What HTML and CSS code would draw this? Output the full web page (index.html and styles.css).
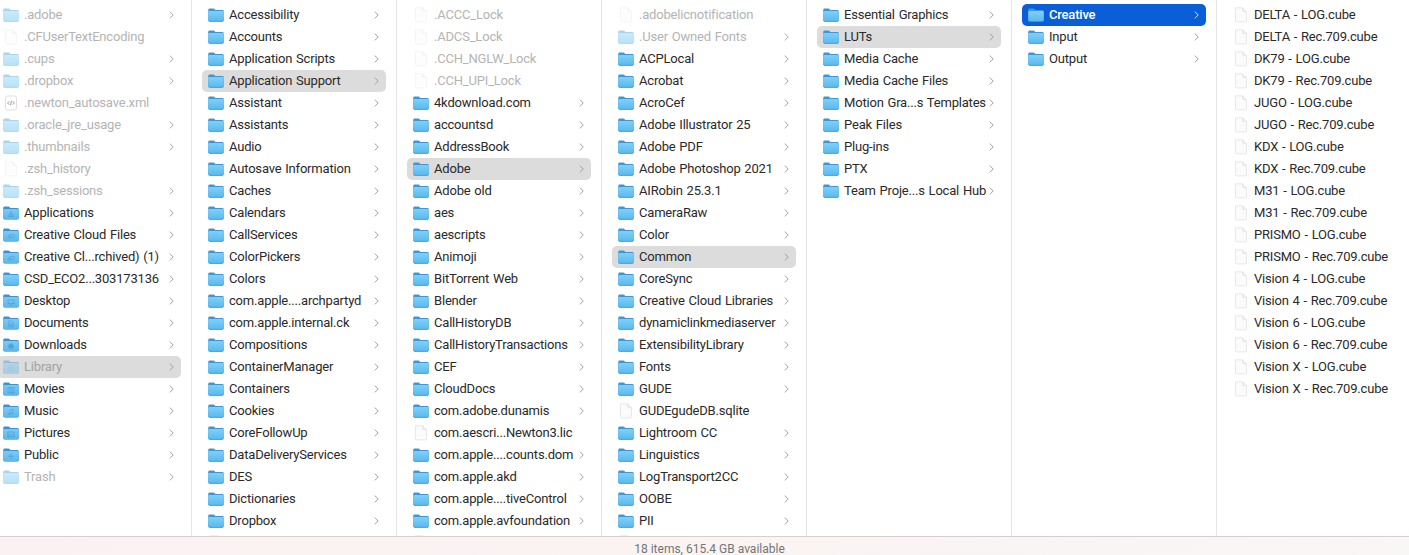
FILE: index.html
```html
<!DOCTYPE html>
<html lang="en">
<head>
<meta charset="utf-8">
<title>Finder</title>
<link rel="stylesheet" href="styles.css">
</head>
<body>
<svg class="defs" aria-hidden="true">
  <defs>
    <linearGradient id="fb" x1="0" y1="0" x2="0" y2="1"><stop offset="0" stop-color="#7fd0f8"/><stop offset="1" stop-color="#5ab8ee"/></linearGradient>
    <linearGradient id="sb" x1="0" y1="0" x2="0" y2="1"><stop offset="0" stop-color="#7ccaf5"/><stop offset="1" stop-color="#5fb5e8"/></linearGradient>
    <symbol id="folder" viewBox="0 0 16 14">
      <path d="M1.8.6h3.600c.6 0 .9.2 1.300.6l.7.7h6.800c1 0 1.600.6 1.600 1.600v8.300c0 1-.6 1.600-1.600 1.600H1.800c-1 0-1.600-.6-1.600-1.600V2.200C.2 1.200.8.600 1.800.600z" fill="#3c97d3"/>
      <path d="M.2 4.400c0-.8.6-1.300 1.500-1.300h12.600c.9 0 1.500.5 1.500 1.300v7.400c0 1-.6 1.600-1.600 1.600H1.800c-1 0-1.600-.6-1.600-1.600z" fill="url(#fb)"/>
      <path d="M.4 12.500c.3.600.8.900 1.400.900h12.400c.6 0 1.100-.3 1.400-.9" fill="none" stroke="#3d9ad6" stroke-width=".7"/>
    </symbol>
    <symbol id="sfolder" viewBox="0 0 16 14">
      <path d="M1.800.6h3.600c.6 0 .9.200 1.300.6l.7.700h6.800c1 0 1.600.600 1.600 1.600v8.300c0 1-.6 1.600-1.600 1.600H1.800c-1 0-1.600-.6-1.600-1.600V2.200C.2 1.200.8.600 1.800.600z" fill="#3b94cf"/>
      <path d="M.2 4.200c0-.8.6-1.300 1.500-1.300h12.600c.9 0 1.500.5 1.500 1.300v7.600c0 1-.6 1.600-1.600 1.600H1.800c-1 0-1.600-.6-1.600-1.600z" fill="url(#sb)"/>
    </symbol>
    <symbol id="doc" viewBox="0 0 16 16">
      <path d="M2.500.8h7.200l3.800 3.800v9.100c0 .8-.4 1.200-1.200 1.200H3.700c-.8 0-1.200-.4-1.200-1.200z" fill="#fbfbfb" stroke="#e2e2e2" stroke-width=".8"/>
      <path d="M9.700.8v3c0 .5.300.8.800.8h3" fill="#efefef" stroke="#dedede" stroke-width=".7"/>
    </symbol>
    <symbol id="xml" viewBox="0 0 16 16">
      <rect x="2.500" y="1" width="11" height="14" rx="2" fill="#fff" stroke="#cfcfcf" stroke-width=".8"/>
      <path d="M6.200 6.300 4.600 8l1.600 1.700M9.800 6.300 11.400 8 9.800 9.700M8.600 5.800 7.400 10.200" fill="none" stroke="#666" stroke-width=".8"/>
    </symbol>
    <symbol id="chev" viewBox="0 0 5 8">
      <path d="M.8.600 4.200 4 .8 7.400" fill="none" stroke="currentColor" stroke-width="1"/>
    </symbol>
  </defs>
</svg>

<main class="browser">
  <section class="col col-first">
    <div class="row dim"><svg class="ic"><use href="#folder"/></svg><span class="name">.adobe</span><svg class="chev"><use href="#chev"/></svg></div>
    <div class="row dim"><svg class="ic-doc"><use href="#doc"/></svg><span class="name">.CFUserTextEncoding</span></div>
    <div class="row dim"><svg class="ic"><use href="#folder"/></svg><span class="name">.cups</span><svg class="chev"><use href="#chev"/></svg></div>
    <div class="row dim"><svg class="ic"><use href="#folder"/></svg><span class="name">.dropbox</span><svg class="chev"><use href="#chev"/></svg></div>
    <div class="row dim"><svg class="ic-doc ic-full"><use href="#xml"/></svg><span class="name">.newton_autosave.xml</span></div>
    <div class="row dim"><svg class="ic"><use href="#folder"/></svg><span class="name">.oracle_jre_usage</span><svg class="chev"><use href="#chev"/></svg></div>
    <div class="row dim"><svg class="ic"><use href="#folder"/></svg><span class="name">.thumbnails</span><svg class="chev"><use href="#chev"/></svg></div>
    <div class="row dim"><svg class="ic-doc"><use href="#doc"/></svg><span class="name">.zsh_history</span></div>
    <div class="row dim"><svg class="ic"><use href="#folder"/></svg><span class="name">.zsh_sessions</span><svg class="chev"><use href="#chev"/></svg></div>
    <div class="row"><svg class="ic" viewBox="0 0 16 14"><use href="#sfolder" width="16" height="14"/><path class="glyph" d="M8 5.500 5.500 10.500h5zM6.500 9h3"/></svg><span class="name">Applications</span><svg class="chev"><use href="#chev"/></svg></div>
    <div class="row"><svg class="ic" viewBox="0 0 16 14"><use href="#sfolder" width="16" height="14"/><path class="glyph" d="M6 8.300c0-1.500 3-2.600 4.800-1.700 1.500.8.900 2.900-1 2.900-1.500 0-2.100-1.800-3.400-1.800-1.400 0-1.800 2-.2 2.300 1 .2 1.700-.3 2.300-.8"/></svg><span class="name">Creative Cloud Files</span><svg class="chev"><use href="#chev"/></svg></div>
    <div class="row"><svg class="ic" viewBox="0 0 16 14"><use href="#sfolder" width="16" height="14"/><path class="glyph" d="M6 8.300c0-1.500 3-2.600 4.800-1.700 1.500.8.900 2.900-1 2.900-1.500 0-2.100-1.800-3.400-1.800-1.400 0-1.800 2-.2 2.300 1 .2 1.700-.3 2.300-.8"/></svg><span class="name">Creative Cl...rchived) (1)</span><svg class="chev"><use href="#chev"/></svg></div>
    <div class="row"><svg class="ic"><use href="#folder"/></svg><span class="name">CSD_ECO2...303173136</span><svg class="chev"><use href="#chev"/></svg></div>
    <div class="row"><svg class="ic" viewBox="0 0 16 14"><use href="#sfolder" width="16" height="14"/><path class="glyph" d="M5 6h6v3.500H5zM6.500 11h3"/></svg><span class="name">Desktop</span><svg class="chev"><use href="#chev"/></svg></div>
    <div class="row"><svg class="ic" viewBox="0 0 16 14"><use href="#sfolder" width="16" height="14"/><path class="glyph" d="M5.800 5h3l1.500 1.500V11H5.800zM6.800 8h2.500M6.800 9.500h2.500"/></svg><span class="name">Documents</span><svg class="chev"><use href="#chev"/></svg></div>
    <div class="row"><svg class="ic" viewBox="0 0 16 14"><use href="#sfolder" width="16" height="14"/><circle class="glyph-fill" cx="8" cy="8.200" r="2.700"/></svg><span class="name">Downloads</span><svg class="chev"><use href="#chev"/></svg></div>
    <div class="row sel-gray dim-text"><svg class="ic dim-ic" viewBox="0 0 16 14"><use href="#sfolder" width="16" height="14"/><path class="glyph" d="M5.500 6h5M5 8h6M5 10.500h6"/></svg><span class="name">Library</span><svg class="chev"><use href="#chev"/></svg></div>
    <div class="row"><svg class="ic" viewBox="0 0 16 14"><use href="#sfolder" width="16" height="14"/><path class="glyph" d="M5 5.500h6v5.500H5zM7 5.500V11M9 5.500V11"/></svg><span class="name">Movies</span><svg class="chev"><use href="#chev"/></svg></div>
    <div class="row"><svg class="ic" viewBox="0 0 16 14"><use href="#sfolder" width="16" height="14"/><path class="glyph" d="M7 10V6l3-.7v4"/><circle class="glyph-fill" cx="6.200" cy="10.200" r=".9"/><circle class="glyph-fill" cx="9.200" cy="9.500" r=".9"/></svg><span class="name">Music</span><svg class="chev"><use href="#chev"/></svg></div>
    <div class="row"><svg class="ic" viewBox="0 0 16 14"><use href="#sfolder" width="16" height="14"/><path class="glyph" d="M4.800 6h6.400v4.800H4.800zM5 10l2-2 1.500 1.300 1-1 1.500 1.500"/></svg><span class="name">Pictures</span><svg class="chev"><use href="#chev"/></svg></div>
    <div class="row"><svg class="ic" viewBox="0 0 16 14"><use href="#sfolder" width="16" height="14"/><path class="glyph" d="M8 5.500v5.500M5 8.200h6"/></svg><span class="name">Public</span><svg class="chev"><use href="#chev"/></svg></div>
    <div class="row dim"><svg class="ic"><use href="#folder"/></svg><span class="name">Trash</span><svg class="chev"><use href="#chev"/></svg></div>
  </section>

  <section class="col">
    <div class="row"><svg class="ic"><use href="#folder"/></svg><span class="name">Accessibility</span><svg class="chev"><use href="#chev"/></svg></div>
    <div class="row"><svg class="ic"><use href="#folder"/></svg><span class="name">Accounts</span><svg class="chev"><use href="#chev"/></svg></div>
    <div class="row"><svg class="ic"><use href="#folder"/></svg><span class="name">Application Scripts</span><svg class="chev"><use href="#chev"/></svg></div>
    <div class="row sel-gray"><svg class="ic"><use href="#folder"/></svg><span class="name">Application Support</span><svg class="chev"><use href="#chev"/></svg></div>
    <div class="row"><svg class="ic"><use href="#folder"/></svg><span class="name">Assistant</span><svg class="chev"><use href="#chev"/></svg></div>
    <div class="row"><svg class="ic"><use href="#folder"/></svg><span class="name">Assistants</span><svg class="chev"><use href="#chev"/></svg></div>
    <div class="row"><svg class="ic"><use href="#folder"/></svg><span class="name">Audio</span><svg class="chev"><use href="#chev"/></svg></div>
    <div class="row"><svg class="ic"><use href="#folder"/></svg><span class="name">Autosave Information</span><svg class="chev"><use href="#chev"/></svg></div>
    <div class="row"><svg class="ic"><use href="#folder"/></svg><span class="name">Caches</span><svg class="chev"><use href="#chev"/></svg></div>
    <div class="row"><svg class="ic"><use href="#folder"/></svg><span class="name">Calendars</span><svg class="chev"><use href="#chev"/></svg></div>
    <div class="row"><svg class="ic"><use href="#folder"/></svg><span class="name">CallServices</span><svg class="chev"><use href="#chev"/></svg></div>
    <div class="row"><svg class="ic"><use href="#folder"/></svg><span class="name">ColorPickers</span><svg class="chev"><use href="#chev"/></svg></div>
    <div class="row"><svg class="ic"><use href="#folder"/></svg><span class="name">Colors</span><svg class="chev"><use href="#chev"/></svg></div>
    <div class="row"><svg class="ic"><use href="#folder"/></svg><span class="name">com.apple....archpartyd</span><svg class="chev"><use href="#chev"/></svg></div>
    <div class="row"><svg class="ic"><use href="#folder"/></svg><span class="name">com.apple.internal.ck</span><svg class="chev"><use href="#chev"/></svg></div>
    <div class="row"><svg class="ic"><use href="#folder"/></svg><span class="name">Compositions</span><svg class="chev"><use href="#chev"/></svg></div>
    <div class="row"><svg class="ic"><use href="#folder"/></svg><span class="name">ContainerManager</span><svg class="chev"><use href="#chev"/></svg></div>
    <div class="row"><svg class="ic"><use href="#folder"/></svg><span class="name">Containers</span><svg class="chev"><use href="#chev"/></svg></div>
    <div class="row"><svg class="ic"><use href="#folder"/></svg><span class="name">Cookies</span><svg class="chev"><use href="#chev"/></svg></div>
    <div class="row"><svg class="ic"><use href="#folder"/></svg><span class="name">CoreFollowUp</span><svg class="chev"><use href="#chev"/></svg></div>
    <div class="row"><svg class="ic"><use href="#folder"/></svg><span class="name">DataDeliveryServices</span><svg class="chev"><use href="#chev"/></svg></div>
    <div class="row"><svg class="ic"><use href="#folder"/></svg><span class="name">DES</span><svg class="chev"><use href="#chev"/></svg></div>
    <div class="row"><svg class="ic"><use href="#folder"/></svg><span class="name">Dictionaries</span><svg class="chev"><use href="#chev"/></svg></div>
    <div class="row"><svg class="ic"><use href="#folder"/></svg><span class="name">Dropbox</span><svg class="chev"><use href="#chev"/></svg></div>
    <div class="row"><svg class="ic-doc"><use href="#doc"/></svg></div>
  </section>

  <section class="col">
    <div class="row dim"><svg class="ic-doc"><use href="#doc"/></svg><span class="name">.ACCC_Lock</span></div>
    <div class="row dim"><svg class="ic-doc"><use href="#doc"/></svg><span class="name">.ADCS_Lock</span></div>
    <div class="row dim"><svg class="ic-doc"><use href="#doc"/></svg><span class="name">.CCH_NGLW_Lock</span></div>
    <div class="row dim"><svg class="ic-doc"><use href="#doc"/></svg><span class="name">.CCH_UPI_Lock</span></div>
    <div class="row"><svg class="ic"><use href="#folder"/></svg><span class="name">4kdownload.com</span><svg class="chev"><use href="#chev"/></svg></div>
    <div class="row"><svg class="ic"><use href="#folder"/></svg><span class="name">accountsd</span><svg class="chev"><use href="#chev"/></svg></div>
    <div class="row"><svg class="ic"><use href="#folder"/></svg><span class="name">AddressBook</span><svg class="chev"><use href="#chev"/></svg></div>
    <div class="row sel-gray"><svg class="ic"><use href="#folder"/></svg><span class="name">Adobe</span><svg class="chev"><use href="#chev"/></svg></div>
    <div class="row"><svg class="ic"><use href="#folder"/></svg><span class="name">Adobe old</span><svg class="chev"><use href="#chev"/></svg></div>
    <div class="row"><svg class="ic"><use href="#folder"/></svg><span class="name">aes</span><svg class="chev"><use href="#chev"/></svg></div>
    <div class="row"><svg class="ic"><use href="#folder"/></svg><span class="name">aescripts</span><svg class="chev"><use href="#chev"/></svg></div>
    <div class="row"><svg class="ic"><use href="#folder"/></svg><span class="name">Animoji</span><svg class="chev"><use href="#chev"/></svg></div>
    <div class="row"><svg class="ic"><use href="#folder"/></svg><span class="name">BitTorrent Web</span><svg class="chev"><use href="#chev"/></svg></div>
    <div class="row"><svg class="ic"><use href="#folder"/></svg><span class="name">Blender</span><svg class="chev"><use href="#chev"/></svg></div>
    <div class="row"><svg class="ic"><use href="#folder"/></svg><span class="name">CallHistoryDB</span><svg class="chev"><use href="#chev"/></svg></div>
    <div class="row"><svg class="ic"><use href="#folder"/></svg><span class="name">CallHistoryTransactions</span><svg class="chev"><use href="#chev"/></svg></div>
    <div class="row"><svg class="ic"><use href="#folder"/></svg><span class="name">CEF</span><svg class="chev"><use href="#chev"/></svg></div>
    <div class="row"><svg class="ic"><use href="#folder"/></svg><span class="name">CloudDocs</span><svg class="chev"><use href="#chev"/></svg></div>
    <div class="row"><svg class="ic"><use href="#folder"/></svg><span class="name">com.adobe.dunamis</span><svg class="chev"><use href="#chev"/></svg></div>
    <div class="row"><svg class="ic-doc"><use href="#doc"/></svg><span class="name">com.aescri...Newton3.lic</span></div>
    <div class="row"><svg class="ic"><use href="#folder"/></svg><span class="name">com.apple....counts.dom</span><svg class="chev"><use href="#chev"/></svg></div>
    <div class="row"><svg class="ic"><use href="#folder"/></svg><span class="name">com.apple.akd</span><svg class="chev"><use href="#chev"/></svg></div>
    <div class="row"><svg class="ic"><use href="#folder"/></svg><span class="name">com.apple....tiveControl</span><svg class="chev"><use href="#chev"/></svg></div>
    <div class="row"><svg class="ic"><use href="#folder"/></svg><span class="name">com.apple.avfoundation</span><svg class="chev"><use href="#chev"/></svg></div>
    <div class="row"><svg class="ic-doc"><use href="#doc"/></svg></div>
  </section>

  <section class="col">
    <div class="row dim"><svg class="ic-doc"><use href="#doc"/></svg><span class="name">.adobelicnotification</span></div>
    <div class="row dim"><svg class="ic"><use href="#folder"/></svg><span class="name">.User Owned Fonts</span><svg class="chev"><use href="#chev"/></svg></div>
    <div class="row"><svg class="ic"><use href="#folder"/></svg><span class="name">ACPLocal</span><svg class="chev"><use href="#chev"/></svg></div>
    <div class="row"><svg class="ic"><use href="#folder"/></svg><span class="name">Acrobat</span><svg class="chev"><use href="#chev"/></svg></div>
    <div class="row"><svg class="ic"><use href="#folder"/></svg><span class="name">AcroCef</span><svg class="chev"><use href="#chev"/></svg></div>
    <div class="row"><svg class="ic"><use href="#folder"/></svg><span class="name">Adobe Illustrator 25</span><svg class="chev"><use href="#chev"/></svg></div>
    <div class="row"><svg class="ic"><use href="#folder"/></svg><span class="name">Adobe PDF</span><svg class="chev"><use href="#chev"/></svg></div>
    <div class="row"><svg class="ic"><use href="#folder"/></svg><span class="name">Adobe Photoshop 2021</span><svg class="chev"><use href="#chev"/></svg></div>
    <div class="row"><svg class="ic"><use href="#folder"/></svg><span class="name">AIRobin 25.3.1</span><svg class="chev"><use href="#chev"/></svg></div>
    <div class="row"><svg class="ic"><use href="#folder"/></svg><span class="name">CameraRaw</span><svg class="chev"><use href="#chev"/></svg></div>
    <div class="row"><svg class="ic"><use href="#folder"/></svg><span class="name">Color</span><svg class="chev"><use href="#chev"/></svg></div>
    <div class="row sel-gray"><svg class="ic"><use href="#folder"/></svg><span class="name">Common</span><svg class="chev"><use href="#chev"/></svg></div>
    <div class="row"><svg class="ic"><use href="#folder"/></svg><span class="name">CoreSync</span><svg class="chev"><use href="#chev"/></svg></div>
    <div class="row"><svg class="ic"><use href="#folder"/></svg><span class="name">Creative Cloud Libraries</span><svg class="chev"><use href="#chev"/></svg></div>
    <div class="row"><svg class="ic"><use href="#folder"/></svg><span class="name">dynamiclinkmediaserver</span><svg class="chev"><use href="#chev"/></svg></div>
    <div class="row"><svg class="ic"><use href="#folder"/></svg><span class="name">ExtensibilityLibrary</span><svg class="chev"><use href="#chev"/></svg></div>
    <div class="row"><svg class="ic"><use href="#folder"/></svg><span class="name">Fonts</span><svg class="chev"><use href="#chev"/></svg></div>
    <div class="row"><svg class="ic"><use href="#folder"/></svg><span class="name">GUDE</span><svg class="chev"><use href="#chev"/></svg></div>
    <div class="row"><svg class="ic-doc"><use href="#doc"/></svg><span class="name">GUDEgudeDB.sqlite</span></div>
    <div class="row"><svg class="ic"><use href="#folder"/></svg><span class="name">Lightroom CC</span><svg class="chev"><use href="#chev"/></svg></div>
    <div class="row"><svg class="ic"><use href="#folder"/></svg><span class="name">Linguistics</span><svg class="chev"><use href="#chev"/></svg></div>
    <div class="row"><svg class="ic"><use href="#folder"/></svg><span class="name">LogTransport2CC</span><svg class="chev"><use href="#chev"/></svg></div>
    <div class="row"><svg class="ic"><use href="#folder"/></svg><span class="name">OOBE</span><svg class="chev"><use href="#chev"/></svg></div>
    <div class="row"><svg class="ic"><use href="#folder"/></svg><span class="name">PII</span><svg class="chev"><use href="#chev"/></svg></div>
    <div class="row"><svg class="ic-doc"><use href="#doc"/></svg></div>
  </section>

  <section class="col">
    <div class="row"><svg class="ic"><use href="#folder"/></svg><span class="name">Essential Graphics</span><svg class="chev"><use href="#chev"/></svg></div>
    <div class="row sel-gray"><svg class="ic"><use href="#folder"/></svg><span class="name">LUTs</span><svg class="chev"><use href="#chev"/></svg></div>
    <div class="row"><svg class="ic"><use href="#folder"/></svg><span class="name">Media Cache</span><svg class="chev"><use href="#chev"/></svg></div>
    <div class="row"><svg class="ic"><use href="#folder"/></svg><span class="name">Media Cache Files</span><svg class="chev"><use href="#chev"/></svg></div>
    <div class="row"><svg class="ic"><use href="#folder"/></svg><span class="name">Motion Gra...s Templates</span><svg class="chev"><use href="#chev"/></svg></div>
    <div class="row"><svg class="ic"><use href="#folder"/></svg><span class="name">Peak Files</span><svg class="chev"><use href="#chev"/></svg></div>
    <div class="row"><svg class="ic"><use href="#folder"/></svg><span class="name">Plug-ins</span><svg class="chev"><use href="#chev"/></svg></div>
    <div class="row"><svg class="ic"><use href="#folder"/></svg><span class="name">PTX</span><svg class="chev"><use href="#chev"/></svg></div>
    <div class="row"><svg class="ic"><use href="#folder"/></svg><span class="name">Team Proje...s Local Hub</span><svg class="chev"><use href="#chev"/></svg></div>
  </section>

  <section class="col">
    <div class="row sel-blue"><svg class="ic"><use href="#folder"/></svg><span class="name">Creative</span><svg class="chev"><use href="#chev"/></svg></div>
    <div class="row"><svg class="ic"><use href="#folder"/></svg><span class="name">Input</span><svg class="chev"><use href="#chev"/></svg></div>
    <div class="row"><svg class="ic"><use href="#folder"/></svg><span class="name">Output</span><svg class="chev"><use href="#chev"/></svg></div>
  </section>

  <section class="col col-last">
    <div class="row"><svg class="ic-doc"><use href="#doc"/></svg><span class="name">DELTA - LOG.cube</span></div>
    <div class="row"><svg class="ic-doc"><use href="#doc"/></svg><span class="name">DELTA - Rec.709.cube</span></div>
    <div class="row"><svg class="ic-doc"><use href="#doc"/></svg><span class="name">DK79 - LOG.cube</span></div>
    <div class="row"><svg class="ic-doc"><use href="#doc"/></svg><span class="name">DK79 - Rec.709.cube</span></div>
    <div class="row"><svg class="ic-doc"><use href="#doc"/></svg><span class="name">JUGO - LOG.cube</span></div>
    <div class="row"><svg class="ic-doc"><use href="#doc"/></svg><span class="name">JUGO - Rec.709.cube</span></div>
    <div class="row"><svg class="ic-doc"><use href="#doc"/></svg><span class="name">KDX - LOG.cube</span></div>
    <div class="row"><svg class="ic-doc"><use href="#doc"/></svg><span class="name">KDX - Rec.709.cube</span></div>
    <div class="row"><svg class="ic-doc"><use href="#doc"/></svg><span class="name">M31 - LOG.cube</span></div>
    <div class="row"><svg class="ic-doc"><use href="#doc"/></svg><span class="name">M31 - Rec.709.cube</span></div>
    <div class="row"><svg class="ic-doc"><use href="#doc"/></svg><span class="name">PRISMO - LOG.cube</span></div>
    <div class="row"><svg class="ic-doc"><use href="#doc"/></svg><span class="name">PRISMO - Rec.709.cube</span></div>
    <div class="row"><svg class="ic-doc"><use href="#doc"/></svg><span class="name">Vision 4 - LOG.cube</span></div>
    <div class="row"><svg class="ic-doc"><use href="#doc"/></svg><span class="name">Vision 4 - Rec.709.cube</span></div>
    <div class="row"><svg class="ic-doc"><use href="#doc"/></svg><span class="name">Vision 6 - LOG.cube</span></div>
    <div class="row"><svg class="ic-doc"><use href="#doc"/></svg><span class="name">Vision 6 - Rec.709.cube</span></div>
    <div class="row"><svg class="ic-doc"><use href="#doc"/></svg><span class="name">Vision X - LOG.cube</span></div>
    <div class="row"><svg class="ic-doc"><use href="#doc"/></svg><span class="name">Vision X - Rec.709.cube</span></div>
  </section>
</main>

<footer class="status">18 items, 615.4 GB available</footer>
</body>
</html>
```

FILE: styles.css
```css
* { box-sizing: border-box; }

html, body {
  margin: 0;
  height: 555px;
  overflow: hidden;
  background: #fff;
}

body {
  display: flex;
  flex-direction: column;
  font-family: Roboto, "Liberation Sans", sans-serif;
  font-size: 13px;
  letter-spacing: -0.19px;
  word-spacing: 0.8px;
  color: #2a2a2a;
}

.defs {
  position: absolute;
  width: 0;
  height: 0;
}

.browser {
  display: flex;
  flex: none;
  height: 536px;
  overflow: hidden;
}

.col {
  flex: none;
  width: 205px;
  padding: 4px 10px 0;
  border-right: 1px solid #e6e6e6;
  overflow: hidden;
}

.col-first { margin-left: -13px; }

.col-last {
  flex: 1;
  border-right: 0;
}

.row {
  display: flex;
  align-items: center;
  height: 22px;
  padding: 0 7px 0 6px;
  border-radius: 5px;
  white-space: nowrap;
}

.ic {
  flex: none;
  width: 16px;
  height: 14px;
  margin-right: 5px;
}

.ic-doc {
  flex: none;
  align-self: flex-start;
  width: 16px;
  height: 16px;
  margin-top: 3px;
  margin-right: 5px;
}

.name {
  flex: 1;
  min-width: 0;
  margin-bottom: 2px;
  overflow: hidden;
}

.chev {
  flex: none;
  width: 5px;
  height: 8px;
  color: #a0a0a0;
}

.dim .ic, .dim .ic-doc, .dim-ic { opacity: .42; }
.dim .ic-full { opacity: .8; }
.dim .name, .dim-text .name { color: #b4b4b4; }
.dim .chev { color: #a8a8a8; }

.glyph {
  fill: none;
  stroke: #3b94cf;
  stroke-width: .8;
  opacity: .6;
}

.glyph-fill {
  fill: #3b94cf;
  opacity: .6;
}

.sel-gray { background: #dcdcdc; }
.sel-gray.dim-text .name { color: #a3a3a3; }

.sel-blue {
  background: #0a5fd8;
  color: #fff;
  font-weight: 500;
}
.sel-blue .chev { color: #d7e5fa; }

.status {
  flex: none;
  height: 19px;
  padding: 5px 0 0 10px;
  border-top: 1px solid #d5d0d0;
  background: linear-gradient(90deg, #fcf1f2, #faf4f3 55%, #f9f6f6);
  color: #757575;
  font-size: 12px;
  letter-spacing: 0;
  word-spacing: 0;
  line-height: 14px;
  text-align: center;
  overflow: hidden;
}
```
